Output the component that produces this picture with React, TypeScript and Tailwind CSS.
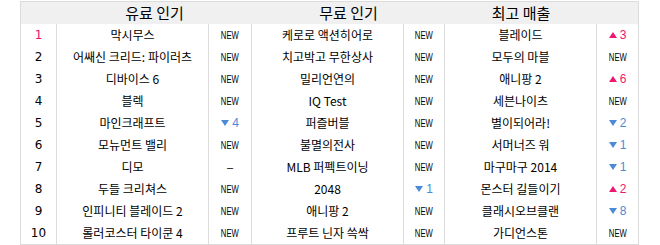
import React from "react";

type Badge = { kind: "new" } | { kind: "up"; n: number } | { kind: "down"; n: number } | { kind: "same" };
type Item = { name: string; badge: Badge };

const N: Badge = { kind: "new" };
const up = (n: number): Badge => ({ kind: "up", n });
const down = (n: number): Badge => ({ kind: "down", n });

const paid: Item[] = [
  { name: "막시무스", badge: N },
  { name: "어쌔신 크리드: 파이러츠", badge: N },
  { name: "디바이스 6", badge: N },
  { name: "블렉", badge: N },
  { name: "마인크래프트", badge: down(4) },
  { name: "모뉴먼트 밸리", badge: N },
  { name: "디모", badge: { kind: "same" } },
  { name: "두들 크리쳐스", badge: N },
  { name: "인피니티 블레이드 2", badge: N },
  { name: "롤러코스터 타이쿤 4", badge: N },
];
const free: Item[] = [
  { name: "케로로 액션히어로", badge: N },
  { name: "치고박고 무한상사", badge: N },
  { name: "밀리언연의", badge: N },
  { name: "IQ Test", badge: N },
  { name: "퍼즐버블", badge: N },
  { name: "불멸의전사", badge: N },
  { name: "MLB 퍼펙트이닝", badge: N },
  { name: "2048", badge: down(1) },
  { name: "애니팡 2", badge: N },
  { name: "프루트 닌자 쓱싹", badge: N },
];
const gross: Item[] = [
  { name: "블레이드", badge: up(3) },
  { name: "모두의 마블", badge: N },
  { name: "애니팡 2", badge: up(6) },
  { name: "세븐나이츠", badge: N },
  { name: "별이되어라!", badge: down(2) },
  { name: "서머너즈 워", badge: down(1) },
  { name: "마구마구 2014", badge: down(1) },
  { name: "몬스터 길들이기", badge: up(2) },
  { name: "클래시오브클랜", badge: down(8) },
  { name: "가디언스톤", badge: N },
];

function BadgeView({ b }: { b: Badge }) {
  if (b.kind === "new")
    return (
      <span className="inline-block origin-center scale-x-[0.7] text-[11px] font-normal text-black [font-family:'Liberation_Sans',sans-serif]">
        NEW
      </span>
    );
  if (b.kind === "same")
    return <span className="text-[11px] text-black [font-family:'Liberation_Sans',sans-serif]">–</span>;
  const isUp = b.kind === "up";
  return (
    <span
      className={`flex items-center gap-[3px] text-[12px] [font-family:'Liberation_Sans',sans-serif] ${
        isUp ? "text-[#f0166e]" : "text-[#4b8ad8]"
      }`}
    >
      {isUp ? (
        <svg width="8" height="6" viewBox="0 0 8 6">
          <polygon points="4,0 8,6 0,6" fill="#f0166e" />
        </svg>
      ) : (
        <svg width="8" height="6" viewBox="0 0 8 6">
          <polygon points="0,0 8,0 4,6" fill="#4b8ad8" />
        </svg>
      )}
      <span>{b.n}</span>
    </span>
  );
}

const nameCls =
  "flex h-[22px] items-center justify-center border-r border-[#dcdcdc] text-[12px] text-black whitespace-nowrap [font-family:'Noto_Sans_CJK_KR','Liberation_Sans',sans-serif]";
const badgeCls = "flex h-[22px] items-center justify-center border-r border-[#dcdcdc]";
const lastBadgeCls = "flex h-[22px] items-center justify-center";
const headCls =
  "flex h-[22px] items-center justify-center bg-[#f0f0f0] text-[15px] text-black [font-family:'Noto_Sans_CJK_KR',sans-serif]";

export default function App() {
  return (
    <div className="h-[245px] w-[660px] bg-white pt-px pl-[20px]">
      <div className="w-[619px] border border-[#dcdcdc]">
        <div className="grid grid-cols-[36px_152px_43px_152px_41px_152px_41px]">
          <div className="h-[22px] bg-[#f0f0f0]" />
          <div className={`col-span-2 ${headCls}`}>유료 인기</div>
          <div className={`col-span-2 ${headCls}`}>무료 인기</div>
          <div className={headCls}>최고 매출</div>
          <div className="h-[22px] bg-[#f0f0f0]" />
          {paid.map((p, i) => (
            <React.Fragment key={i}>
              <div
                className={`flex h-[22px] items-center justify-center border-r border-[#dcdcdc] text-[12px] [font-family:'DejaVu_Sans',sans-serif] ${
                  i === 0 ? "text-[#e8136a]" : "text-black"
                }`}
              >
                {i + 1}
              </div>
              <div className={nameCls}>{p.name}</div>
              <div className={badgeCls}>
                <BadgeView b={p.badge} />
              </div>
              <div className={nameCls}>{free[i].name}</div>
              <div className={badgeCls}>
                <BadgeView b={free[i].badge} />
              </div>
              <div className={nameCls}>{gross[i].name}</div>
              <div className={lastBadgeCls}>
                <BadgeView b={gross[i].badge} />
              </div>
            </React.Fragment>
          ))}
        </div>
      </div>
    </div>
  );
}
